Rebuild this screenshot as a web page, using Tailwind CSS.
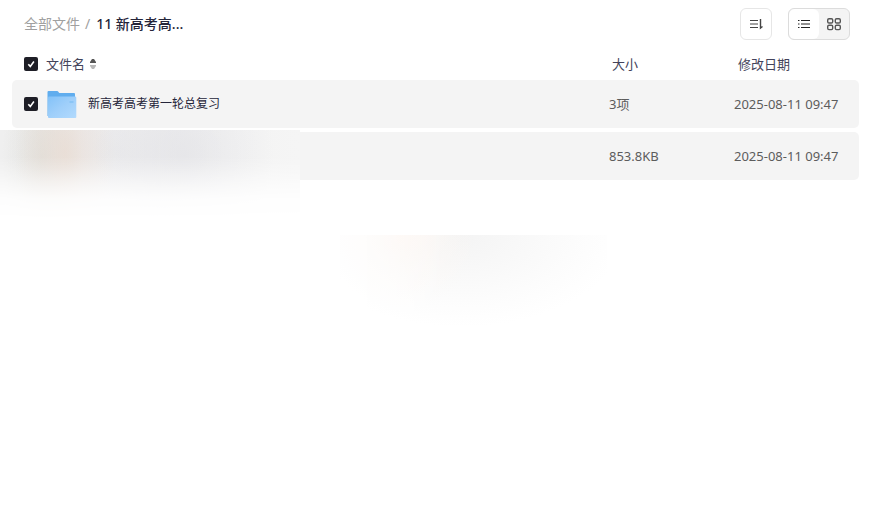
<!DOCTYPE html>
<html lang="zh-CN">
<head>
  <meta charset="utf-8">
  <meta name="viewport" content="width=device-width, initial-scale=1">
  <title>全部文件</title>
  <script src="https://cdn.jsdelivr.net/npm/@tailwindcss/browser@4"></script>
</head>
<body class="relative min-h-screen bg-white font-['Noto_Sans','Noto_Sans_CJK_SC',sans-serif] text-[13px] leading-5 text-[#43435a]">
  <header class="flex items-center justify-between pt-2 pl-6 pr-6">
    <nav class="flex items-center text-sm">
      <a href="#" class="text-[#a0a0a0]">全部文件</a>
      <span class="pr-[6px] pl-[5px] text-[#a0a0a0]">/</span>
      <span class="font-medium text-[#25253a]">11 新高考高...</span>
    </nav>
    <div class="flex items-center gap-4">
      <button type="button" aria-label="排序" class="flex size-8 items-center justify-center rounded-md border border-[#e6e6e6] bg-white">
        <svg width="16" height="16" viewBox="0 0 16 16" fill="none" stroke="#444" stroke-width="1.2">
          <path d="M2 4.500h8M2 8h8M2 11.500h8"></path>
          <path d="M12.500 3v9l2-1.500" stroke-width="1.400"></path>
        </svg>
      </button>
      <div class="flex h-8 overflow-hidden rounded-md border border-[#dcdcdc] bg-[#f4f4f4]">
        <button type="button" aria-label="列表" class="flex w-[30px] items-center justify-center rounded-md bg-white">
          <svg width="16" height="16" viewBox="0 0 16 16" fill="none" stroke="#222" stroke-width="1.2">
            <path d="M2 4.500h1.500M2 8h1.500M2 11.500h1.500M5 4.500h9M5 8h9M5 11.500h9"></path>
          </svg>
        </button>
        <button type="button" aria-label="网格" class="flex w-[30px] items-center justify-center">
          <svg width="16" height="16" viewBox="0 0 16 16" fill="none" stroke="#555" stroke-width="1.4">
            <rect x="1.700" y="2.700" width="5" height="4.300" rx="1.300"></rect>
            <rect x="9.300" y="2.700" width="5" height="4.300" rx="1.300"></rect>
            <rect x="1.700" y="9.300" width="5" height="4.300" rx="1.300"></rect>
            <rect x="9.300" y="9.300" width="5" height="4.300" rx="1.300"></rect>
          </svg>
        </button>
      </div>
    </div>
  </header>

  <main class="pt-2 pl-3 pr-[15px]">
    <table class="w-full table-fixed border-separate border-spacing-x-0 border-spacing-y-1">
      <thead>
        <tr class="h-6 text-left">
          <th class="p-0 pl-3 font-normal">
            <div class="flex items-center">
              <span class="relative flex size-[14px]">
                <input type="checkbox" id="all" checked aria-label="全选" class="size-[14px] appearance-none rounded-xs bg-[#1e1e26]">
                <svg class="pointer-events-none absolute inset-0" width="14" height="14" viewBox="0 0 14 14" fill="none" stroke="#fff" stroke-width="1.600">
                  <path d="M4.300 7.200l2 2.200 3.600-4.800"></path>
                </svg>
              </span>
              <label for="all" class="pl-2">文件名</label>
              <svg class="ml-1" width="8" height="12" viewBox="0 0 8 12">
                <path d="M3 1h2l2 3v1H1V4z" fill="#555"></path>
                <path d="M3 11h2l2-3V7H1v1z" fill="#b8b8b8"></path>
              </svg>
            </div>
          </th>
          <th class="w-[125px] p-0 pl-[3px] font-normal">大小</th>
          <th class="w-[125px] p-0 pl-1 font-normal">修改日期</th>
        </tr>
      </thead>
      <tbody class="text-[#5c5c5c]">
        <tr class="h-12">
          <td class="rounded-l-[5px] bg-[#f4f4f4] p-0 pl-3">
            <div class="flex items-center">
              <span class="relative flex size-[14px]">
                <input type="checkbox" id="folder" checked class="size-[14px] appearance-none rounded-xs bg-[#1e1e26]">
                <svg class="pointer-events-none absolute inset-0" width="14" height="14" viewBox="0 0 14 14" fill="none" stroke="#fff" stroke-width="1.600">
                  <path d="M4.300 7.200l2 2.200 3.600-4.800"></path>
                </svg>
              </span>
              <svg class="ml-2" width="32" height="32" viewBox="0 0 32 32">
                <defs>
                  <linearGradient id="front" x1="0" y1="0" x2="1" y2="1">
                    <stop offset="0" stop-color="#83c2f8"></stop>
                    <stop offset=".5" stop-color="#9fcffa"></stop>
                    <stop offset="1" stop-color="#b2dafd"></stop>
                  </linearGradient>
                </defs>
                <path d="M1.500 4q0-1 1-1h8.500q1 0 1.500 1l.8 1H28q1 0 1 1v22H1.500z" fill="#60adee"></path>
                <path d="M2 9.500q0-1 1-1h26q1.300 0 1.300 1.300V29q0 1-1 1H3q-1 0-1-1z" fill="url(#front)"></path>
                <path d="M23.500 14h4" stroke="#85c2f4" stroke-width="1.500"></path>
              </svg>
              <label for="folder" class="pl-[10px] text-xs leading-5 text-[#25253a]">新高考高考第一轮总复习</label>
            </div>
          </td>
          <td class="bg-[#f4f4f4] p-0">3项</td>
          <td class="rounded-r-[5px] bg-[#f4f4f4] p-0">2025-08-11 09:47</td>
        </tr>
        <tr class="h-12">
          <td class="rounded-l-[5px] bg-[#f4f4f4] p-0"></td>
          <td class="bg-[#f4f4f4] p-0">853.8KB</td>
          <td class="rounded-r-[5px] bg-[#f4f4f4] p-0">2025-08-11 09:47</td>
        </tr>
      </tbody>
    </table>
  </main>

  <!-- soft covers over the file name and the preview -->
  <div class="absolute top-[130px] left-0 h-[90px] w-[300px] bg-white">
    <div class="h-full bg-[radial-gradient(50px_90px_at_65px_22px,#eadacfaa,#eadacf55_45%,#eadacf00),radial-gradient(40px_100px_at_42px_26px,#dadad4aa,#dadad455_50%,#dadad400),radial-gradient(90px_100px_at_184px_24px,#e2e2e6aa,#e2e2e655_50%,#e2e2e600),radial-gradient(110px_90px_at_115px_20px,#e6e6e9aa,#e6e6e900),linear-gradient(to_right,#efefef,#f1f1f1_50%,#f5f5f5)] mask-[linear-gradient(#000_30%,#000c_42%,#0007_58%,#0002_76%,#0000)]"></div>
  </div>
  <div class="absolute top-[235px] left-[340px] h-[90px] w-[267px] bg-[radial-gradient(75px_75px_at_62px_0px,#fff5efaa,#fff8f355_50%,#fff8f300),radial-gradient(160px_92px_at_122px_0px,#f4f4f4,#f8f8f8_35%,#fcfcfc_70%,#fff)] mask-[linear-gradient(to_right,#0006,#0009_20%,#000_40%)]"></div>
</body>
</html>
